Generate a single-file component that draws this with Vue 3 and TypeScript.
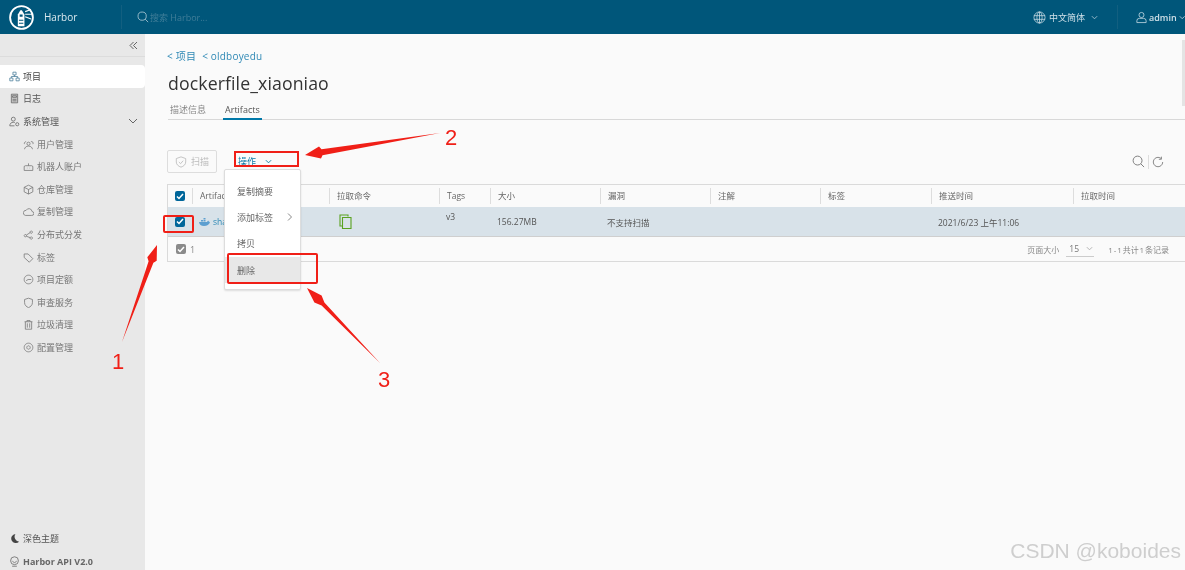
<script setup lang="ts">
interface NavItem { label: string; icon: string }

const subItems: NavItem[] = [
  { label: '用户管理', icon: 'M5 6a2 2 0 1 1 4 0 2 2 0 0 1-4 0M2 13c0-2 2-4 5-4s5 2 5 4M10 3.500a2 2 0 0 1 2.500 3M2 6.500a2 2 0 0 1 2-3' },
  { label: '机器人账户', icon: 'M3 6h8a1.500 1.500 0 0 1 1.500 1.500V12H1.500V7.500A1.500 1.500 0 0 1 3 6ZM7 6V3M5 9h.5M8.500 9h.5' },
  { label: '仓库管理', icon: 'M7 1.500 12.500 4.200V10L7 12.800 1.500 10V4.200ZM1.500 4.200 7 7l5.500-2.800M7 7v5.800' },
  { label: '复制管理', icon: 'M3 12h8a2.500 2.500 0 0 0 .5-5A4 4 0 0 0 4 5.500 3.300 3.300 0 0 0 3 12Z' },
  { label: '分布式分发', icon: 'M3 7a1.500 1.500 0 1 1-.01 0M10.500 2.500a1.500 1.500 0 1 1-.01 0M10.500 10a1.500 1.500 0 1 1-.01 0M4.300 7.700 9.300 4.500M4.300 9.300 9.300 11' },
  { label: '标签', icon: 'M1.500 2.500h5l6 6-4.500 4.500-6.500-6Z' },
  { label: '项目定额', icon: 'M7 1.500a5.500 5.500 0 1 1-.01 0M4 8.500 6.500 7h4' },
  { label: '审查服务', icon: 'M7 1.500 12 3.200v4C12 10.500 9.500 12.500 7 13.500 4.500 12.500 2 10.500 2 7.200v-4Z' },
  { label: '垃圾清理', icon: 'M2 3.500h10M5 3.500V2h4v1.500M3 3.500V13h8V3.500M5.500 5.500V11M8.500 5.500V11' },
  { label: '配置管理', icon: 'M7 1.500a5.500 5.500 0 1 1-.01 0M7 4.800a2.200 2.200 0 1 1-.01 0' },
]

const columns: { label: string; width: number }[] = [
  { label: 'Artifacts', width: 137 },
  { label: '拉取命令', width: 110 },
  { label: 'Tags', width: 51 },
  { label: '大小', width: 110 },
  { label: '漏洞', width: 110 },
  { label: '注解', width: 110 },
  { label: '标签', width: 111 },
  { label: '推送时间', width: 142 },
  { label: '拉取时间', width: 112 },
]

const cells: string[] = ['sha256:', '', 'v3', '156.27MB', '不支持扫描', '', '', '2021/6/23 上午11:06', '']
const menu: string[] = ['复制摘要', '添加标签', '拷贝', '删除']
</script>

<template>
  <div class="page">
    <header class="topbar">
      <div class="brand">
        <svg class="logo" viewBox="0 0 34 34" width="25" height="25">
          <circle cx="17" cy="17" r="15.500" fill="none" stroke="#fff" stroke-width="2.500" />
          <path d="M12 29V13l3.500-6h2l3.500 6v16Z" fill="#fff" />
          <path d="M14.500 13h4v3h-4ZM13.500 20h6v1.500h-6ZM13.500 24h6v1.500h-6Z" fill="#00567a" />
          <path d="M22 9l8-3M22 12.500h10M22 16l8 3" stroke="#fff" stroke-width="1.500" />
        </svg>
        <span class="brand-name">Harbor</span>
      </div>
      <div class="search">
        <svg width="12" height="12" viewBox="0 0 14 14" fill="none" stroke="#a9c6d3" stroke-width="1">
          <circle cx="6" cy="6" r="4.800" /><path d="M9.500 9.500 13 13" />
        </svg>
        <span>搜索 Harbor...</span>
      </div>
      <div class="lang">
        <svg width="13" height="13" viewBox="0 0 14 14" fill="none" stroke="#cfe0e8" stroke-width=".8">
          <circle cx="7" cy="7" r="6" /><ellipse cx="7" cy="7" rx="2.800" ry="6" /><path d="M1 5h12M1 9h12M7 1v12" />
        </svg>
        <span>中文简体</span>
        <svg class="caret" width="7" height="5" viewBox="0 0 8 5" fill="none" stroke="#a9c6d3"><path d="M1 1l3 3 3-3" /></svg>
      </div>
      <div class="user">
        <svg width="12" height="13" viewBox="0 0 13 14" fill="none" stroke="#cfe0e8" stroke-width=".9">
          <circle cx="6.500" cy="4" r="3" /><path d="M1 13v-2a3 3 0 0 1 3-3h5a3 3 0 0 1 3 3v2Z" />
        </svg>
        <span>admin</span>
        <svg class="caret tight" width="7" height="5" viewBox="0 0 8 5" fill="none" stroke="#cfe0e8"><path d="M1 1l3 3 3-3" /></svg>
      </div>
    </header>

    <div class="body">
      <aside class="sidebar">
        <div class="collapse">
          <svg width="9" height="9" viewBox="0 0 9 9" fill="none" stroke="#666"><path d="M4.500 1 1 4.500 4.500 8M8 1 4.500 4.500 8 8" /></svg>
        </div>
        <nav class="nav">
          <a class="item active">
            <svg width="11" height="11" viewBox="0 0 14 14" fill="none" stroke="#4c7f9c" stroke-width="1">
              <path d="M5 1.500h4v3.500H5ZM1 9h4v3.500H1ZM9 9h4v3.500H9ZM7 5v2M3 9V7h8v2" />
            </svg>
            <span>项目</span>
          </a>
          <a class="item">
            <svg width="11" height="11" viewBox="0 0 14 14" fill="#ccc" stroke="#666" stroke-width="1">
              <path d="M3 1.500h8v11H3Z" /><path d="M4.500 3.500h5v2h-5ZM4.500 8h5M4.500 10h5" />
            </svg>
            <span>日志</span>
          </a>
          <a class="item">
            <svg width="11" height="11" viewBox="0 0 14 14" fill="none" stroke="#666" stroke-width="1">
              <circle cx="5.500" cy="4" r="2.500" /><path d="M1 12.500c0-3 2-4.500 4.500-4.500 1 0 1.500.2 2 .5M1 12.500h6" /><circle cx="10.500" cy="10.500" r="2" />
            </svg>
            <span>系统管理</span>
            <svg class="expand" width="10" height="6" viewBox="0 0 10 6" fill="none" stroke="#666"><path d="M1 1l4 4 4-4" /></svg>
          </a>
          <a v-for="sub in subItems" :key="sub.label" class="item sub">
            <svg width="11" height="11" viewBox="0 0 14 14" fill="none" stroke="#777" stroke-width="1"><path :d="sub.icon" /></svg>
            <span>{{ sub.label }}</span>
          </a>
        </nav>
        <div class="side-foot">
          <a class="foot-item">
            <svg width="11" height="11" viewBox="0 0 12 12"><path d="M7 1a5 5 0 1 0 4 8.500A5.500 5.500 0 0 1 7 1Z" fill="#444" /></svg>
            <span>深色主题</span>
          </a>
          <a class="foot-item">
            <svg width="11" height="11" viewBox="0 0 14 14" fill="none" stroke="#666"><circle cx="7" cy="6" r="5" /><path d="M4 6l3 3 3-3M4 13h6" /></svg>
            <span class="api">Harbor API V2.0</span>
          </a>
        </div>
      </aside>

      <main class="main">
        <div class="crumbs"><a>&lt; 项目</a><a>&lt; oldboyedu</a></div>
        <h1 class="title">dockerfile_xiaoniao</h1>
        <div class="tabs">
          <span class="tab">描述信息</span>
          <span class="tab current">Artifacts</span>
        </div>

        <div class="toolbar">
          <button class="scan" type="button">
            <svg width="12" height="12" viewBox="0 0 14 14" fill="none" stroke="#bbb">
              <path d="M7 1 12.500 3v4c0 3-2.500 5-5.500 6C4 12 1.500 10 1.500 7V3ZM4.500 7l2 2 3-3.500" />
            </svg>
            <span>扫描</span>
          </button>
          <div class="action">
            <span>操作</span>
            <svg width="7" height="5" viewBox="0 0 8 5" fill="none" stroke="#00789e"><path d="M1 1l3 3 3-3" /></svg>
            <div class="menu">
              <div v-for="(m, i) in menu" :key="m" class="menu-item" :class="{ hover: i === 3 }">
                <span>{{ m }}</span>
                <svg v-if="i === 1" width="5" height="8" viewBox="0 0 5 8" fill="none" stroke="#888"><path d="M1 .5 4.500 4 1 7.500" /></svg>
              </div>
            </div>
          </div>
          <div class="tools">
            <svg width="13" height="13" viewBox="0 0 14 14" fill="none" stroke="#777">
              <circle cx="6" cy="6" r="4.800" /><path d="M9.500 9.500 13 13" />
            </svg>
            <i class="sep"></i>
            <svg width="12" height="12" viewBox="0 0 14 14" fill="none" stroke="#777">
              <path d="M12.500 7A5.500 5.500 0 1 1 10.500 2.800M11 .8v3H8" />
            </svg>
          </div>
        </div>

        <div class="grid">
          <div class="row head">
            <div class="check-cell">
              <span class="check"><svg width="8" height="7" viewBox="0 0 8 7" fill="none" stroke="#fff" stroke-width="1.500"><path d="M1 3.500 3 5.500 7 1" /></svg></span>
            </div>
            <div v-for="c in columns" :key="c.label" class="hcell" :style="{ width: c.width + 'px' }"><span>{{ c.label }}</span></div>
          </div>
          <div class="row data">
            <div class="check-cell">
              <span class="check"><svg width="8" height="7" viewBox="0 0 8 7" fill="none" stroke="#fff" stroke-width="1.500"><path d="M1 3.500 3 5.500 7 1" /></svg></span>
            </div>
            <div v-for="(c, i) in columns" :key="c.label" class="dcell" :class="{ up: i === 2 }" :style="{ width: c.width + 'px' }">
              <template v-if="i === 0">
                <svg class="whale" width="11" height="8" viewBox="0 0 11 8"><path d="M0 4h8c.5-1 1-1.300 1.500-1.200.3.300.4.700.3 1 .4 0 .8.100 1.200.4C10.300 6.500 8 8 5 8 2 8 .3 6.500 0 4Zm2-2h2v1.500H2Zm2.500 0h2v1.500h-2Zm0-2h2v1.500h-2Z" fill="#5d9fd0" /></svg>
                <a class="sha">{{ cells[i] }}</a>
              </template>
              <svg v-else-if="i === 1" class="copy" width="13" height="15" viewBox="0 0 13 15" fill="none" stroke="#5aa220" stroke-width="1.100">
                <path d="M3 12H1V1h8v1.500" /><path d="M3.500 3.500h8.500V14.500H3.500Z" />
              </svg>
              <span v-else>{{ cells[i] }}</span>
            </div>
          </div>
          <div class="row foot">
            <span class="check grey"><svg width="8" height="7" viewBox="0 0 8 7" fill="none" stroke="#fff" stroke-width="1.500"><path d="M1 3.500 3 5.500 7 1" /></svg></span>
            <span class="count">1</span>
            <div class="pager">
              <span>页面大小</span>
              <span class="size">15<svg width="7" height="5" viewBox="0 0 8 5" fill="none" stroke="#aaa"><path d="M1 1l3 3 3-3" /></svg></span>
              <span class="records">1 - 1 共计 1 条记录</span>
            </div>
          </div>
        </div>
        <div class="scrollmark"></div>
      </main>
    </div>

    <svg class="marks" width="1185" height="570" viewBox="0 0 1185 570">
      <g fill="none" stroke="#f01f17" stroke-width="2">
        <rect x="235" y="152" width="63" height="14" />
        <rect x="164" y="216" width="29" height="16" rx="1" />
        <rect x="228" y="254" width="89" height="29" rx="1" />
      </g>
      <g fill="#f01f17">
        <path d="M122 342 148.600 261.200 147.300 257.300 157 245 156.700 260.700 153.400 262.800Z" />
        <path d="M440 133 321.500 149.200 319 146.600 305 155 321 158.400 322.500 155.200Z" />
        <path d="M380 363 324.400 302.600 321.600 295.500 307 288 314.400 302.500 321.600 305.400Z" />
      </g>
      <g class="digits" fill="#f01f17">
        <text x="112" y="369">1</text>
        <text x="445" y="145">2</text>
        <text x="378" y="387">3</text>
      </g>
    </svg>
    <div class="watermark">CSDN @koboides</div>
  </div>
</template>

<style>
html, body { margin: 0; padding: 0; background: #fafafa; }
</style>

<style scoped>
.page {
  position: relative;
  width: 1185px;
  height: 570px;
  overflow: hidden;
  display: flex;
  flex-direction: column;
  background: #fafafa;
  font-family: "Open Sans", "Noto Sans CJK SC", sans-serif;
  font-size: 9px;
  color: #666;
  filter: blur(.3px);
}
.topbar {
  flex: 0 0 34px;
  display: flex;
  align-items: center;
  background: #00567a;
  color: #cfe0e8;
}
.brand { width: 122px; display: flex; align-items: center; padding-left: 9px; box-sizing: border-box; border-right: 1px solid #125f80; height: 24px; }
.logo { flex: none; }
.brand-name { margin-left: 10px; font-size: 10px; color: #d9e8ee; }
.search { display: flex; align-items: center; gap: 1px; margin-left: 15px; color: #3f7d98; font-size: 9px; }
.lang { margin-left: auto; display: flex; align-items: center; gap: 3px; width: 85px; height: 24px; border-right: 1px solid #125f80; font-size: 9px; box-sizing: border-box; }
.caret { margin-left: 3px; }
.user { display: flex; align-items: center; gap: 2px; width: 67px; padding-left: 18px; box-sizing: border-box; font-size: 9px; font-weight: 600; }
.caret.tight { margin-left: 0; }

.body { flex: 1; display: flex; min-height: 0; }
.sidebar {
  width: 145px;
  flex: none;
  display: flex;
  flex-direction: column;
  background: #e8e8e8;
}
.collapse {
  height: 23px;
  display: flex;
  align-items: center;
  justify-content: flex-end;
  padding-right: 7px;
  border-bottom: 1px solid #dcdcdc;
  box-sizing: border-box;
}
.nav { display: flex; flex-direction: column; padding-top: 8px; }
.item {
  height: 22.600px;
  display: flex;
  align-items: center;
  gap: 3px;
  padding-left: 9px;
  color: #555;
  position: relative;
}
.item.active { background: #fff; border-radius: 0 4px 4px 0; color: #444; }
.item.sub { padding-left: 23px; color: #777; }
.expand { position: absolute; right: 7px; top: 8px; }
.side-foot { margin-top: auto; display: flex; flex-direction: column; gap: 9px; padding: 0 0 2px 9px; }
.foot-item { display: flex; align-items: center; gap: 3px; height: 14px; color: #555; }
.api { font-weight: 700; color: #666; }

.main { flex: 1; position: relative; padding: 15px 0 0 23px; min-width: 0; }
.crumbs { display: flex; gap: 6px; font-size: 10px; color: #2f89b5; line-height: 14px; margin-left: -1px; letter-spacing: .2px; }
.title { margin: 9px 0 0; font-size: 17.700px; font-weight: 400; line-height: 22px; color: #333; letter-spacing: .1px; }
.tabs { display: flex; gap: 17px; height: 18px; margin-top: 7px; padding-left: 2px; border-bottom: 1px solid #d8d8d8; font-size: 9px; line-height: 18px; }
.tab { color: #888; box-sizing: border-box; height: 19px; }
.tab.current { color: #555; border-bottom: 2px solid #0078a8; padding: 0 2px; }

.toolbar { display: flex; align-items: center; height: 23px; margin: 30px 0 0 -1px; }
.scan {
  width: 50px; height: 23px; padding: 0;
  display: flex; align-items: center; justify-content: center; gap: 4px;
  background: #fafafa; border: 1px solid #ddd; border-radius: 2px;
  font: inherit; color: #bbb;
}
.action { position: relative; display: flex; align-items: center; gap: 9px; margin-left: 21px; font-size: 9px; color: #0f7ba8; }
.menu {
  position: absolute; left: -14px; top: 14px; width: 77px; height: 121px;
  padding-top: 8px; box-sizing: border-box;
  background: #fff; border: 1px solid #ddd; border-radius: 2px;
  box-shadow: 0 1px 2px rgba(0,0,0,.12); z-index: 3;
}
.menu-item { height: 26.300px; display: flex; align-items: center; justify-content: space-between; padding: 0 8px 0 12px; color: #666; }
.menu-item.hover { background: #e8e8e8; }
.tools { margin-left: auto; display: flex; align-items: center; gap: 3px; padding-right: 21px; }
.sep { width: 1px; height: 14px; background: #ddd; }

.grid { margin: 11px -1px 0 -1px; border: 1px solid #dadada; border-right: 0; height: 78px; box-sizing: border-box; background: #fafafa; }
.row { display: flex; }
.head { height: 22px; background: #fafafa; border-bottom: 0; align-items: center; }
.check-cell { width: 24px; flex: none; display: flex; align-items: center; justify-content: center; box-sizing: border-box; }
.check {
  display: inline-flex; align-items: center; justify-content: center;
  width: 10px; height: 10px; border-radius: 2px; background: #00669a;
}
.check.grey { background: #8a8a8a; }
.hcell { flex: none; box-sizing: border-box; height: 16px; line-height: 16px; padding-left: 7px; border-left: 1px solid #ddd; overflow: hidden; white-space: nowrap; color: #666; font-size: 8.500px; }
.data { height: 30px; background: #d8e2e9; align-items: center; border-bottom: 1px solid #cfcfcf; box-sizing: border-box; }
.dcell { flex: none; box-sizing: border-box; padding-left: 7px; display: flex; align-items: center; white-space: nowrap; color: #555; font-size: 8.500px; height: 100%; overflow: hidden; }
.dcell.up { align-items: flex-start; padding-top: 4px; }
.whale { margin-right: 3px; }
.sha { color: #2f89b5; }
.copy { margin: 0 0 0 3px; }
.foot { height: 24px; align-items: center; padding-left: 8px; }
.count { margin-left: 4px; color: #888; }
.pager { margin-left: auto; display: flex; align-items: center; gap: 7px; padding-right: 17px; color: #888; font-size: 8px; }
.size { display: flex; align-items: center; gap: 7px; width: 28px; height: 15px; padding-left: 3px; box-sizing: border-box; border-bottom: 1px solid #ccc; color: #777; font-size: 8.500px; }
.records { margin-left: 7px; word-spacing: -1.200px; }
.scrollmark { position: absolute; right: 0; top: 6px; width: 3px; height: 66px; background: #e4e4e4; }

.marks { position: absolute; left: 0; top: 0; pointer-events: none; z-index: 5; }
.digits { font-family: "Liberation Sans", sans-serif; font-size: 22px; }
.watermark {
  position: absolute; right: 4px; bottom: 7px; z-index: 5;
  font-family: "Liberation Sans", sans-serif; font-size: 21px;
  color: rgba(140,140,140,.4);
}
</style>
